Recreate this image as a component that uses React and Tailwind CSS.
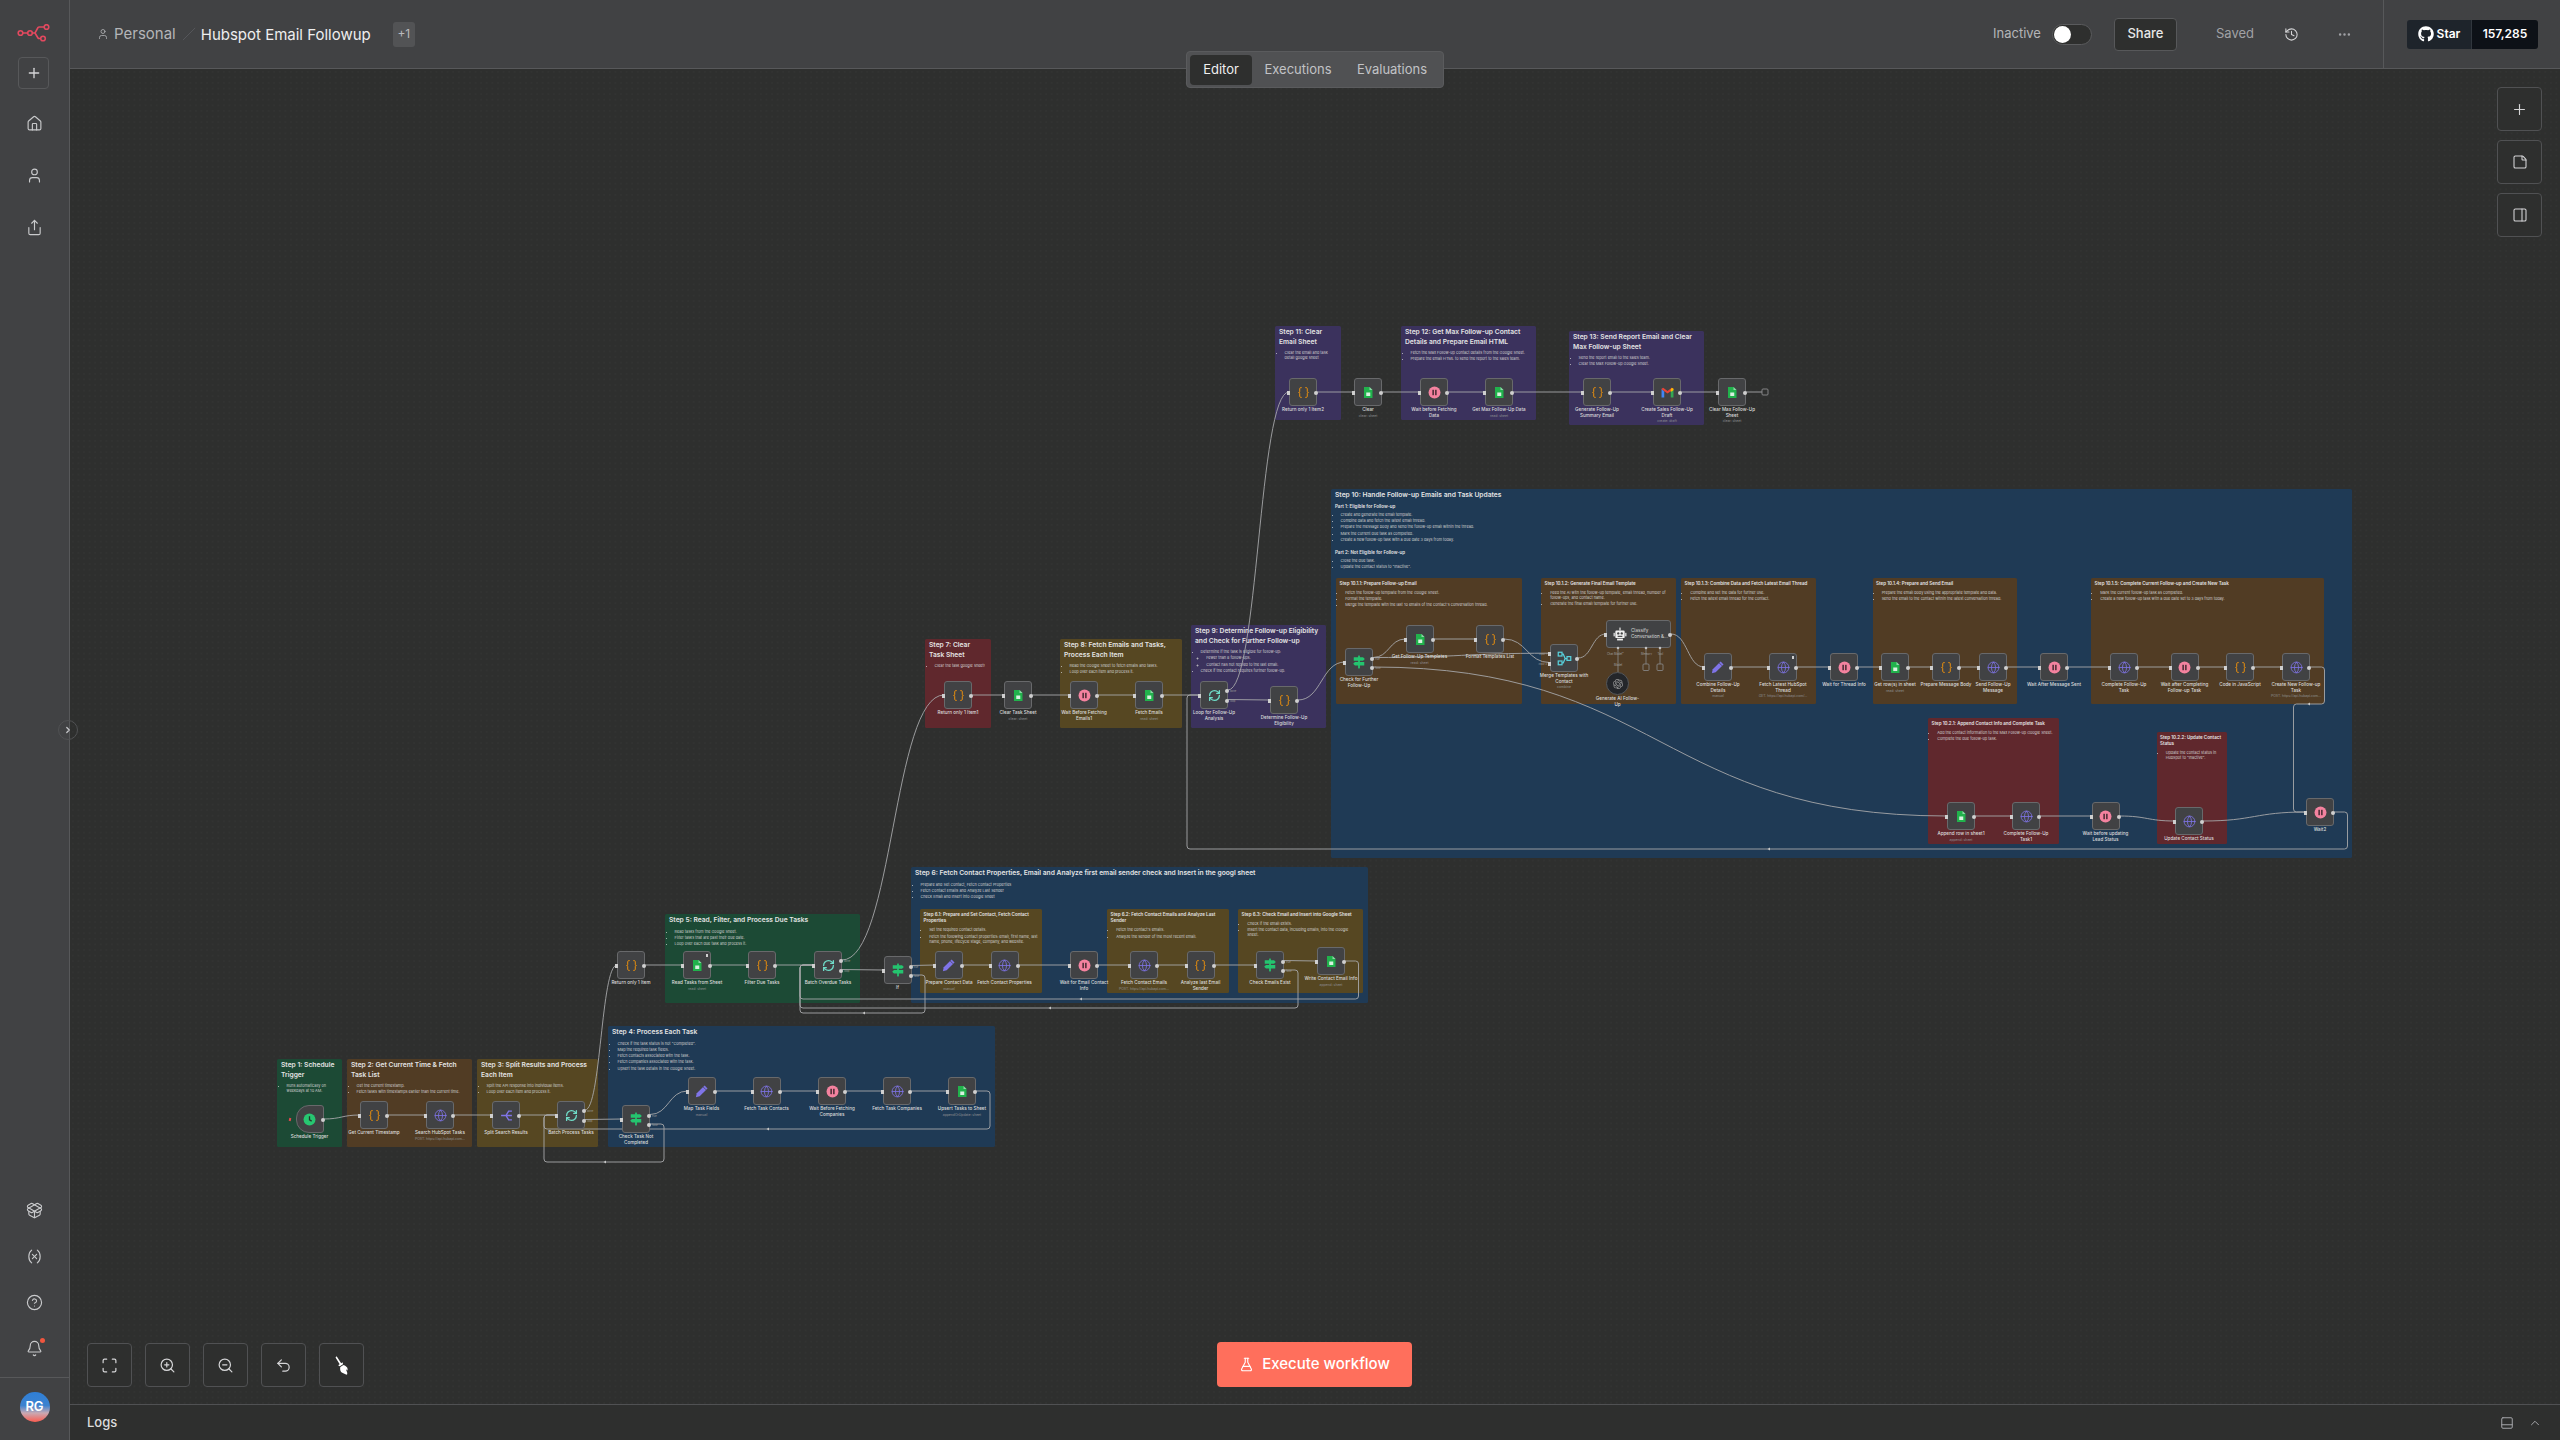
import {
  Plus, House, User, Share, PackageOpen, Variable, CircleHelp, Bell, History, Ellipsis,
  StickyNote, PanelRight, Maximize, ZoomIn, ZoomOut, Undo2, FlaskConical, ChevronUp,
  ChevronRight, PanelBottom, Braces, Globe, RefreshCw, Slash,
} from 'lucide-react';
import { FaBroom, FaGithub } from 'react-icons/fa';
import { SiOpenai } from 'react-icons/si';

const GREEN = 'bg-[#1c4a35]';
const BROWN = 'bg-[#513c24]';
const OLIVE = 'bg-[#564722]';
const BLUE = 'bg-[#1f3a55]';
const RED = 'bg-[#60282d]';
const PURPLE = 'bg-[#3b325d]';

const stickies = [
  { x: 277, y: 1059, w: 65, h: 88, color: GREEN, title: 'Step 1: Schedule Trigger', items: ['Runs automatically on weekdays at 10 AM.'] },
  { x: 347, y: 1059, w: 125, h: 88, color: BROWN, title: 'Step 2: Get Current Time & Fetch Task List', items: ['Get the current timestamp.', 'Fetch tasks with timestamps earlier than the current time.'] },
  { x: 477, y: 1059, w: 121, h: 88, color: OLIVE, title: 'Step 3: Split Results and Process Each Item', items: ['Split the API response into individual items.', 'Loop over each item and process it.'] },
  { x: 608, y: 1026, w: 387, h: 121, color: BLUE, title: 'Step 4: Process Each Task', items: ['Check if the task status is not "Completed".', 'Map the required task fields.', 'Fetch contacts associated with the task.', 'Fetch companies associated with the task.', 'Upsert the task details in the Google Sheet.'] },
  { x: 665, y: 914, w: 195, h: 89, color: GREEN, title: 'Step 5: Read, Filter, and Process Due Tasks', items: ['Read tasks from the Google Sheet.', 'Filter tasks that are past their due date.', 'Loop over each due task and process it.'] },
  { x: 911, y: 867, w: 457, h: 136, color: BLUE, title: 'Step 6: Fetch Contact Properties, Email and Analyze first email sender check and Insert in the googl sheet', items: ['Prepare and Set Contact, Fetch Contact Properties', 'Fetch Contact Emails and Analyze Last Sender', 'Check Email and Insert into Google Sheet'] },
  { x: 920, y: 909, w: 122, h: 84, color: OLIVE, small: true, title: 'Step 6.1: Prepare and Set Contact, Fetch Contact Properties', items: ['Set the required contact details.', 'Fetch the following contact properties: email, first name, last name, phone, lifecycle stage, company, and website.'] },
  { x: 1107, y: 909, w: 121.5, h: 84, color: OLIVE, small: true, title: 'Step 6.2: Fetch Contact Emails and Analyze Last Sender', items: ["Fetch the contact's emails.", 'Analyze the sender of the most recent email.'] },
  { x: 1238, y: 909, w: 125, h: 84, color: OLIVE, small: true, title: 'Step 6.3: Check Email and Insert into Google Sheet', items: ['Check if the email exists.', 'Insert the contact data, including emails, into the Google Sheet.'] },
  { x: 925, y: 639, w: 66, h: 89, color: RED, title: 'Step 7: Clear Task Sheet', items: ['Clear the task google sheet!'] },
  { x: 1060, y: 639, w: 122, h: 89, color: OLIVE, title: 'Step 8: Fetch Emails and Tasks, Process Each Item', items: ['Read the Google Sheet to fetch emails and tasks.', 'Loop over each item and process it.'] },
  { x: 1191, y: 625, w: 135, h: 103, color: PURPLE, title: 'Step 9: Determine Follow-up Eligibility and Check for Further Follow-up', items: ['Determine if the task is eligible for follow-up:', ['Fewer than 8 follow-ups.', 'Contact has not replied to the last email.'], 'Check if the contact requires further follow-up.'] },
  { x: 1275, y: 326, w: 66, h: 94, color: PURPLE, title: 'Step 11: Clear Email Sheet', items: ['Clear the email and task detail google sheet'] },
  { x: 1401, y: 326, w: 135, h: 94, color: PURPLE, title: 'Step 12: Get Max Follow-up Contact Details and Prepare Email HTML', items: ['Fetch the Max Follow-up contact details from the Google Sheet.', 'Prepare the email HTML to send the report to the sales team.'] },
  { x: 1569, y: 331, w: 135, h: 94, color: PURPLE, title: 'Step 13: Send Report Email and Clear Max Follow-up Sheet', items: ['Send the report email to the sales team.', 'Clear the Max Follow-up Google Sheet.'] },
  {
    x: 1331, y: 489, w: 1021, h: 369, color: BLUE, title: 'Step 10: Handle Follow-up Emails and Task Updates',
    parts: [
      { head: 'Part 1: Eligible for Follow-up', items: ['Create and generate the email template.', 'Combine data and fetch the latest email thread.', 'Prepare the message body and send the follow-up email within the thread.', 'Mark the current due task as completed.', 'Create a new follow-up task with a due date 3 days from today.'] },
      { head: 'Part 2: Not Eligible for Follow-up', items: ['Close the due task.', 'Update the contact status to "Inactive".'] },
    ],
  },
  { x: 1336, y: 578, w: 186, h: 126, color: BROWN, small: true, title: 'Step 10.1.1: Prepare Follow-up Email', items: ['Fetch the follow-up template from the Google Sheet.', 'Format the template.', "Merge the template with the last 10 emails of the contact's conversation thread."] },
  { x: 1541, y: 578, w: 134.5, h: 126, color: BROWN, small: true, title: 'Step 10.1.2: Generate Final Email Template', items: ['Feed the AI with the follow-up template, email thread, number of follow-ups, and contact name.', 'Generate the final email template for further use.'] },
  { x: 1681, y: 578, w: 135, h: 126, color: BROWN, small: true, title: 'Step 10.1.3: Combine Data and Fetch Latest Email Thread', items: ['Combine and set the data for further use.', 'Fetch the latest email thread for the contact.'] },
  { x: 1872.5, y: 578, w: 144, h: 126, color: BROWN, small: true, title: 'Step 10.1.4: Prepare and Send Email', items: ['Prepare the email body using the appropriate template and data.', 'Send the email to the contact within the latest conversation thread.'] },
  { x: 2091, y: 578, w: 233, h: 126, color: BROWN, small: true, title: 'Step 10.1.5: Complete Current Follow-up and Create New Task', items: ['Mark the current follow-up task as completed.', 'Create a new follow-up task with a due date set to 3 days from today.'] },
  { x: 1928, y: 718, w: 130.5, h: 126, color: RED, small: true, title: 'Step 10.2.1: Append Contact Info and Complete Task', items: ['Add the contact information to the Max Follow-up Google Sheet.', 'Complete the due follow-up task.'] },
  { x: 2156.5, y: 732, w: 70, h: 112, color: RED, small: true, title: 'Step 10.2.2: Update Contact Status', items: ['Update the contact status in HubSpot to "Inactive".'] },
];

const LOOP_OUTS = [{ at: 9, text: 'done' }, { at: 18.5, text: 'loop' }];
const IF_OUTS = [{ at: 9.5, text: 'true' }, { at: 19, text: 'false' }];

const nodes = [
  { id: 'sched', x: 295.5, y: 1105, icon: 'clock', label: 'Schedule Trigger', trigger: true },
  { id: 'now', x: 360, y: 1101, icon: 'code', label: 'Get Current Timestamp' },
  { id: 'search', x: 426, y: 1101, icon: 'globe', label: 'Search HubSpot Tasks', sub: 'POST: https://api.hubapi.com...' },
  { id: 'split', x: 492, y: 1101, icon: 'split', label: 'Split Search Results' },
  { id: 'batch', x: 557, y: 1101, icon: 'loop', label: 'Batch Process Tasks', outs: LOOP_OUTS },
  { id: 'check', x: 622, y: 1105, icon: 'if', label: 'Check Task Not\nCompleted', outs: IF_OUTS },
  { id: 'map', x: 687.5, y: 1077, icon: 'edit', label: 'Map Task Fields', sub: 'manual' },
  { id: 'contacts', x: 752.5, y: 1077, icon: 'globe', label: 'Fetch Task Contacts' },
  { id: 'waitco', x: 818, y: 1077, icon: 'wait', label: 'Wait Before Fetching\nCompanies' },
  { id: 'companies', x: 883, y: 1077, icon: 'globe', label: 'Fetch Task Companies' },
  { id: 'upsert', x: 948, y: 1077, icon: 'sheet', label: 'Upsert Tasks to Sheet', sub: 'appendOrUpdate: sheet' },

  { id: 'ret', x: 617, y: 951, icon: 'code', label: 'Return only 1 Item' },
  { id: 'read', x: 683, y: 951, icon: 'sheet', label: 'Read Tasks from Sheet', sub: 'read: sheet', mark: true },
  { id: 'due', x: 748, y: 951, icon: 'code', label: 'Filter Due Tasks' },
  { id: 'overdue', x: 814, y: 951, icon: 'loop', label: 'Batch Overdue Tasks', outs: LOOP_OUTS },
  { id: 'if', x: 883.5, y: 956, icon: 'if', label: 'If', outs: IF_OUTS },
  { id: 'prep', x: 935, y: 951, icon: 'edit', label: 'Prepare Contact Data', sub: 'manual' },
  { id: 'props', x: 990.5, y: 951, icon: 'globe', label: 'Fetch Contact Properties' },
  { id: 'waitmail', x: 1070, y: 951, icon: 'wait', label: 'Wait for Email Contact\nInfo' },
  { id: 'mails', x: 1130, y: 951, icon: 'globe', label: 'Fetch Contact Emails', sub: 'POST: https://api.hubapi.com...' },
  { id: 'analyze', x: 1186.5, y: 951, icon: 'code', label: 'Analyze last Email\nSender' },
  { id: 'exist', x: 1256, y: 951, icon: 'if', label: 'Check Emails Exist', outs: IF_OUTS },
  { id: 'write', x: 1317, y: 947, icon: 'sheet', label: 'Write Contact Email Info', sub: 'append: sheet' },

  { id: 'ret1', x: 944, y: 681, icon: 'code', label: 'Return only 1 Item1' },
  { id: 'cleartask', x: 1004, y: 681, icon: 'sheet', label: 'Clear Task Sheet', sub: 'clear: sheet' },
  { id: 'waitfetch', x: 1070, y: 681, icon: 'wait', label: 'Wait Before Fetching\nEmails1' },
  { id: 'fetchmails', x: 1135, y: 681, icon: 'sheet', label: 'Fetch Emails', sub: 'read: sheet' },
  { id: 'loop', x: 1200, y: 681, icon: 'loop', label: 'Loop for Follow-Up\nAnalysis', outs: LOOP_OUTS },
  { id: 'elig', x: 1270, y: 686, icon: 'code', label: 'Determine Follow-Up\nEligibility' },

  { id: 'ret2', x: 1289, y: 378, icon: 'code', label: 'Return only 1 Item2' },
  { id: 'clear', x: 1354, y: 378, icon: 'sheet', label: 'Clear', sub: 'clear: sheet' },
  { id: 'waitdata', x: 1420, y: 378, icon: 'wait', label: 'Wait before Fetching\nData' },
  { id: 'max', x: 1485, y: 378, icon: 'sheet', label: 'Get Max Follow-Up Data', sub: 'read: sheet' },
  { id: 'summary', x: 1583, y: 378, icon: 'code', label: 'Generate Follow-Up\nSummary Email' },
  { id: 'draft', x: 1653, y: 378, icon: 'gmail', label: 'Create Sales Follow-Up\nDraft', sub: 'create: draft' },
  { id: 'clearmax', x: 1718, y: 378, icon: 'sheet', label: 'Clear Max Follow-Up\nSheet', sub: 'clear: sheet' },

  { id: 'further', x: 1345, y: 648, icon: 'if', label: 'Check for Further\nFollow-Up', outs: IF_OUTS },
  { id: 'tpl', x: 1405.5, y: 625, icon: 'sheet', label: 'Get Follow-Up Templates', sub: 'read: sheet' },
  { id: 'fmt', x: 1476, y: 625, icon: 'code', label: 'Format Templates List' },
  { id: 'merge', x: 1550, y: 644, icon: 'merge', label: 'Merge Templates with\nContact', sub: 'combine', ins: [{ at: 9.2, text: 'Input 1' }, { at: 18.6, text: 'Input 2' }] },
  { id: 'combine', x: 1704, y: 653, icon: 'edit', label: 'Combine Follow-Up\nDetails', sub: 'manual' },
  { id: 'thread', x: 1769, y: 653, icon: 'globe', label: 'Fetch Latest HubSpot\nThread', sub: 'GET: https://api.hubapi.com/...', mark: true },
  { id: 'waitthread', x: 1830, y: 653, icon: 'wait', label: 'Wait for Thread Info' },
  { id: 'rows', x: 1881, y: 653, icon: 'sheet', label: 'Get row(s) in sheet', sub: 'read: sheet' },
  { id: 'body', x: 1932, y: 653, icon: 'code', label: 'Prepare Message Body' },
  { id: 'send', x: 1979, y: 653, icon: 'globe', label: 'Send Follow-Up\nMessage' },
  { id: 'waitsent', x: 2040, y: 653, icon: 'wait', label: 'Wait After Message Sent' },
  { id: 'complete', x: 2110, y: 653, icon: 'globe', label: 'Complete Follow-Up\nTask' },
  { id: 'waitdone', x: 2170.5, y: 653, icon: 'wait', label: 'Wait after Completing\nFollow-up Task' },
  { id: 'js', x: 2226, y: 653, icon: 'code', label: 'Code in JavaScript' },
  { id: 'newtask', x: 2282, y: 653, icon: 'globe', label: 'Create New Follow-up\nTask', sub: 'POST: https://api.hubapi.com...' },

  { id: 'append', x: 1947, y: 802, icon: 'sheet', label: 'Append row in sheet1', sub: 'append: sheet' },
  { id: 'complete1', x: 2012, y: 802, icon: 'globe', label: 'Complete Follow-Up\nTask1' },
  { id: 'waitlead', x: 2091.5, y: 802, icon: 'wait', label: 'Wait before updating\nLead Status' },
  { id: 'status', x: 2175, y: 807, icon: 'globe', label: 'Update Contact Status' },
  { id: 'wait2', x: 2306, y: 798, icon: 'wait', label: 'Wait2' },
];

const byId = Object.fromEntries(nodes.map((n) => [n.id, n]));

function outAt(id, i = 0) {
  const n = byId[id];
  return [n.x + 28, n.y + (n.outs ? n.outs[i].at : 14)];
}

function inAt(id, i = 0) {
  const n = byId[id];
  return [n.x, n.y + (n.ins ? n.ins[i].at : 14)];
}

function curve([x1, y1], [x2, y2]) {
  if (Math.abs(y1 - y2) < 1) return `M${x1} ${y1}L${x2} ${y2}`;
  const mid = (x1 + x2) / 2;
  return `M${x1} ${y1}C${mid} ${y1} ${mid} ${y2} ${x2} ${y2}`;
}

// orthogonal back-edge with small rounded corners
function rounded(points, r = 3) {
  let d = `M${points[0][0]} ${points[0][1]}`;
  for (let i = 1; i < points.length - 1; i++) {
    const [px, py] = points[i - 1];
    const [x, y] = points[i];
    const [nx, ny] = points[i + 1];
    const a = [x - Math.sign(x - px) * r, y - Math.sign(y - py) * r];
    const b = [x + Math.sign(nx - x) * r, y + Math.sign(ny - y) * r];
    d += `L${a[0]} ${a[1]}Q${x} ${y} ${b[0]} ${b[1]}`;
  }
  const last = points[points.length - 1];
  return d + `L${last[0]} ${last[1]}`;
}

function chain(ids) {
  return ids.slice(1).map((id, i) => curve(outAt(ids[i]), inAt(id)));
}

const edges = [
  ...chain(['sched', 'now', 'search', 'split', 'batch']),
  curve(outAt('batch', 1), inAt('check')),
  curve(outAt('batch', 0), inAt('ret')),
  curve(outAt('check', 0), inAt('map')),
  ...chain(['map', 'contacts', 'waitco', 'companies', 'upsert']),
  rounded([outAt('upsert'), [990, 1091], [990, 1129], [544, 1129], [544, 1115], inAt('batch')]),
  rounded([outAt('check', 1), [664, 1124], [664, 1162], [544, 1162], [544, 1115], inAt('batch')]),

  ...chain(['ret', 'read', 'due', 'overdue']),
  curve(outAt('overdue', 0), inAt('ret1')),
  curve(outAt('overdue', 1), inAt('if')),
  curve(outAt('if', 0), inAt('prep')),
  ...chain(['prep', 'props', 'waitmail', 'mails', 'analyze', 'exist']),
  curve(outAt('exist', 0), inAt('write')),
  rounded([outAt('exist', 1), [1298, 970], [1298, 1008], [800, 1008], [800, 965], inAt('overdue')]),
  rounded([outAt('write'), [1358.5, 961], [1358.5, 999], [800, 999], [800, 965], inAt('overdue')]),
  rounded([outAt('if', 1), [925, 975], [925, 1013], [800, 1013], [800, 965], inAt('overdue')]),

  ...chain(['ret1', 'cleartask', 'waitfetch', 'fetchmails', 'loop']),
  curve(outAt('loop', 0), inAt('ret2')),
  curve(outAt('loop', 1), inAt('elig')),
  curve(outAt('elig'), inAt('further')),
  ...chain(['ret2', 'clear', 'waitdata', 'max', 'summary', 'draft', 'clearmax']),
  'M1746 392L1762 392',

  curve(outAt('further', 0), inAt('tpl')),
  curve(outAt('further', 0), inAt('merge', 0)),
  curve(outAt('further', 1), inAt('append')),
  ...chain(['tpl', 'fmt']),
  curve(outAt('fmt'), inAt('merge', 1)),
  curve(outAt('merge'), [1606, 634]),
  curve([1671, 634], inAt('combine')),
  ...chain(['combine', 'thread', 'waitthread', 'rows', 'body', 'send', 'waitsent', 'complete', 'waitdone', 'js', 'newtask']),
  rounded([outAt('newtask'), [2324.5, 667], [2324.5, 704], [2293.5, 704], [2293.5, 812], inAt('wait2')]),
  rounded([outAt('wait2'), [2347.5, 812], [2347.5, 849], [1187, 849], [1187, 695], inAt('loop')]),
  ...chain(['append', 'complete1', 'waitlead', 'status', 'wait2']),
];

const arrows = [[768, 1129], [605, 1162], [1050, 1008], [1081, 999], [864, 1013], [2309, 704], [1769, 849]];

function SheetIcon() {
  return (
    <svg viewBox="0 0 24 24" className="w-[12px] h-[13px]">
      <path d="M4 1h11l6 6v16H4z" fill="#21b24c" />
      <path d="M15 1l6 6h-6z" fill="#8fd5a8" />
      <rect x="8.5" y="12" width="8" height="7" fill="#d8f1e0" />
    </svg>
  );
}

function WaitIcon() {
  return (
    <svg viewBox="0 0 24 24" className="w-[13px] h-[13px]">
      <circle cx="12" cy="12" r="11" fill="#f4829f" />
      <rect x="8" y="7" width="3" height="10" fill="#54303b" />
      <rect x="13" y="7" width="3" height="10" fill="#54303b" />
    </svg>
  );
}

function EditIcon() {
  return (
    <svg viewBox="0 0 24 24" className="w-[14px] h-[14px]">
      <path d="M16.5 2.5l5 5L8 21l-6.5 1.5L3 16z" fill="#7f74e8" />
      <path d="M14 5l5 5" stroke="#414244" strokeWidth="1.2" />
    </svg>
  );
}

function IfIcon() {
  return (
    <svg viewBox="0 0 24 24" className="w-[14px] h-[14px]" fill="#24c46f">
      <rect x="10.5" y="1" width="3" height="22" />
      <path d="M3 4h16l3 3-3 3H3z" />
      <path d="M21 12H5l-3 3 3 3h16z" />
    </svg>
  );
}

function SplitIcon() {
  return (
    <svg viewBox="0 0 24 24" fill="none" stroke="#7f74e8" strokeWidth="2.6" className="w-[13px] h-[13px]">
      <path d="M2 12h8M22 4h-6l-5 8 5 8h6M22 12H11" />
    </svg>
  );
}

function MergeIcon() {
  return (
    <svg viewBox="0 0 24 24" fill="none" stroke="#58d0dc" strokeWidth="2" className="w-[15px] h-[15px]">
      <rect x="2" y="2" width="6" height="6" />
      <rect x="2" y="16" width="6" height="6" />
      <rect x="16" y="9" width="6" height="6" />
      <path d="M8 5h2l3 7-3 7H8M13 12h3" />
    </svg>
  );
}

function ClockIcon() {
  return (
    <svg viewBox="0 0 24 24" className="w-[13px] h-[13px]">
      <circle cx="12" cy="12" r="11" fill="#27c671" />
      <path d="M12 6v6.5l4 2.5" fill="none" stroke="#24392d" strokeWidth="2.4" />
    </svg>
  );
}

function BotIcon() {
  return (
    <svg viewBox="0 0 24 24" className="w-[14px] h-[14px]" fill="#f0f0f0">
      <rect x="11" y="1" width="2" height="5" />
      <rect x="4" y="6" width="16" height="13" rx="2" />
      <rect x="1" y="10" width="2" height="6" />
      <rect x="21" y="10" width="2" height="6" />
      <rect x="7" y="20" width="10" height="3" />
      <circle cx="9" cy="11" r="2" fill="#414244" />
      <circle cx="15" cy="11" r="2" fill="#414244" />
      <rect x="8" y="15" width="8" height="2" fill="#414244" />
    </svg>
  );
}

function GmailIcon() {
  return (
    <svg viewBox="0 0 24 24" className="w-[13px] h-[13px]">
      <path d="M1 5v16h5V10z" fill="#4285f4" />
      <path d="M23 5v16h-5V10z" fill="#34a853" />
      <path d="M1 5l3-2 8 6 8-6 3 2v1l-11 8L1 6z" fill="#ea4335" />
      <path d="M20 3l3 2v3l-5 3V6z" fill="#fbbc04" />
    </svg>
  );
}

function NodeIcon({ name }) {
  if (name === 'code') return <Braces size={13} strokeWidth={1.8} className="text-[#f0920c]" />;
  if (name === 'globe') return <Globe size={13} strokeWidth={1.5} className="text-[#7f74e8]" />;
  if (name === 'loop') return <RefreshCw size={13} strokeWidth={2.4} className="text-[#6fdcc8]" />;
  if (name === 'sheet') return <SheetIcon />;
  if (name === 'wait') return <WaitIcon />;
  if (name === 'edit') return <EditIcon />;
  if (name === 'if') return <IfIcon />;
  if (name === 'split') return <SplitIcon />;
  if (name === 'merge') return <MergeIcon />;
  if (name === 'clock') return <ClockIcon />;
  if (name === 'gmail') return <GmailIcon />;
  return null;
}

function OutPort({ at, text }) {
  return (
    <div className="absolute left-full flex items-center" style={{ top: at - 2 }}>
      <div className="w-[4px] h-[4px] -ml-[2px] rounded-full bg-[#cfcfcf]" />
      {text && <span className="ml-[1px] text-[2.6px] leading-[4px] text-[#9a9a9a]">{text}</span>}
    </div>
  );
}

function InPort({ at, text }) {
  return (
    <div className="absolute right-full flex items-center" style={{ top: at - 2 }}>
      {text && <span className="mr-[1px] text-[2.6px] leading-[4px] text-[#9a9a9a] whitespace-nowrap">{text}</span>}
      <div className="w-[3px] h-[4px] bg-[#cfcfcf]" />
    </div>
  );
}

function WorkflowNode({ node }) {
  const outs = node.outs || [{ at: 14 }];
  const ins = node.trigger ? [] : node.ins || [{ at: 14 }];
  return (
    <div
      className={`absolute w-[28px] h-[28px] flex items-center justify-center bg-[#414244] border border-[#68696b] ${node.trigger ? 'rounded-l-[13px] rounded-r-[3px]' : 'rounded-[3px]'}`}
      style={{ left: node.x, top: node.y }}
    >
      <NodeIcon name={node.icon} />
      {node.mark && <div className="absolute top-[2px] right-[2px] w-[2.5px] h-[3px] border-[0.5px] border-[#d0d0d0]" />}
      {node.trigger && <span className="absolute left-[-8px] top-[12px] w-[2px] h-[3px] bg-[#e5484d] rotate-12" />}
      {ins.map((p) => <InPort key={p.at} {...p} />)}
      {outs.map((p) => <OutPort key={p.at} {...p} />)}
      <div className="absolute top-full left-1/2 -translate-x-1/2 mt-[2px] text-center whitespace-pre">
        <div className="text-[4.6px] leading-[5.9px] font-medium text-[#dcdcdc]">{node.label}</div>
        {node.sub && <div className="mt-[0.6px] text-[3.4px] leading-[4.4px] text-[#8f9092]">{node.sub}</div>}
      </div>
    </div>
  );
}

function AgentNode() {
  return (
    <>
      <div className="absolute left-[1606px] top-[620px] w-[65px] h-[28px] flex items-center gap-[4px] pl-[6px] bg-[#414244] border border-[#68696b] rounded-[3px]">
        <BotIcon />
        <span className="text-[4.6px] leading-[6.2px] text-[#dcdcdc] whitespace-pre">{'Classify\nConversation &...'}</span>
        <div className="absolute right-full top-[12px] w-[3px] h-[4px] bg-[#cfcfcf]" />
        <div className="absolute left-full top-[12px] w-[4px] h-[4px] -ml-[2px] rounded-full bg-[#cfcfcf]" />
      </div>
      <svg className="absolute left-0 top-0 w-full h-full pointer-events-none" fill="none" stroke="#8c8d8f" strokeWidth="0.8">
        <path d="M1618 648V672M1646 648V664M1660 648V664" />
        <path d="M1618 646.5l1.5 1.5-1.5 1.5-1.5-1.5zM1646 646.5l1.5 1.5-1.5 1.5-1.5-1.5zM1660 646.5l1.5 1.5-1.5 1.5-1.5-1.5z" fill="#cfcfcf" stroke="none" />
        <rect x="1643" y="664" width="6" height="6.5" rx="1" />
        <rect x="1657" y="664" width="6" height="6.5" rx="1" />
      </svg>
      <span className="absolute left-[1607px] top-[651.5px] text-[2.8px] leading-[4px] text-[#a0a0a0]">Chat Model*</span>
      <span className="absolute left-[1641px] top-[651.5px] text-[2.8px] leading-[4px] text-[#a0a0a0]">Memory</span>
      <span className="absolute left-[1657.5px] top-[651.5px] text-[2.8px] leading-[4px] text-[#a0a0a0]">Tool</span>
      <span className="absolute left-[1614px] top-[662.5px] text-[2.8px] leading-[4px] text-[#a0a0a0]">Model</span>
      <div className="absolute left-[1606px] top-[672px] w-[23px] h-[23px] rounded-full flex items-center justify-center bg-[#24262a] border border-[#55575a]">
        <SiOpenai size={10} className="text-[#9a9a9a]" />
        <div className="absolute top-full left-1/2 -translate-x-1/2 mt-[2px] text-center whitespace-pre text-[4.6px] leading-[5.9px] font-medium text-[#dcdcdc]">{'Generate AI Follow-\nUp'}</div>
      </div>
    </>
  );
}

function BulletList({ items, className }) {
  return (
    <ul className={`list-disc pl-[5.6px] text-[3.8px] leading-[5.1px] text-[#cfcfcf] ${className || ''}`}>
      {items.map((item, i) =>
        Array.isArray(item) ? (
          <li key={i} className="list-none">
            <ul className="pl-[5.6px] [list-style-type:circle]">
              {item.map((sub) => <li key={sub} className="mb-[1.1px]">{sub}</li>)}
            </ul>
          </li>
        ) : (
          <li key={i} className="mb-[1.1px]">{item}</li>
        ),
      )}
    </ul>
  );
}

function Sticky({ note }) {
  return (
    <div
      className={`absolute rounded-[1.5px] overflow-hidden ${note.small ? 'px-[3.6px] pt-[2.7px]' : 'pl-[4px] pr-[6px] pt-[2.4px]'} ${note.color}`}
      style={{ left: note.x, top: note.y, width: note.w, height: note.h }}
    >
      <div className={note.small ? 'mb-[2.5px] text-[4.5px] leading-[6.6px] font-semibold text-[#e4e4e4]' : 'mb-[3px] text-[6.7px] leading-[9.4px] font-semibold text-[#e4e4e4]'}>
        {note.title}
      </div>
      {note.items && <BulletList items={note.items} />}
      {note.parts &&
        note.parts.map((part) => (
          <div key={part.head} className="mb-[8px]">
            <div className="text-[4.5px] leading-[6.6px] font-semibold text-[#e4e4e4]">{part.head}</div>
            <BulletList items={part.items} className="mt-[1.7px]" />
          </div>
        ))}
    </div>
  );
}

function WorkflowGraph() {
  return (
    <div className="absolute left-[-70px] top-[-69px] w-[2560px] h-[1440px] pointer-events-none">
      {stickies.map((note) => <Sticky key={note.title} note={note} />)}
      <svg className="absolute left-0 top-0 w-full h-full" fill="none" stroke="#a6a7a9" strokeWidth="0.9">
        {edges.map((d, i) => <path key={i} d={d} />)}
        {arrows.map(([x, y]) => (
          <polygon key={x} points={`${x - 1.5},${y} ${x + 1},${y - 1.6} ${x + 1},${y + 1.6}`} fill="#c8c8c8" stroke="none" />
        ))}
        <rect x="1762" y="389" width="6" height="6" rx="1" stroke="#8c8d8f" />
      </svg>
      {nodes.map((node) => <WorkflowNode key={node.id} node={node} />)}
      <AgentNode />
    </div>
  );
}

function N8nLogo() {
  return (
    <svg viewBox="0 0 34 18" className="w-[34px] h-[18px]" fill="none" stroke="#e2495f" strokeWidth="1.6">
      <circle cx="3.5" cy="9" r="2.3" />
      <circle cx="13" cy="9" r="2.3" />
      <circle cx="29.5" cy="3" r="2.3" />
      <circle cx="26" cy="14.5" r="2.3" />
      <path d="M5.8 9h4.9M15.3 9h2.7l3-5.5c.4-.5.8-.5 1.2-.5h5M18 9l3 5c.3.5.8.5 1.2.5h1.5" />
    </svg>
  );
}

function SideIcon({ children }) {
  return <div className="w-full h-[52px] flex items-center justify-center text-[#c9cacc]">{children}</div>;
}

function Sidebar() {
  return (
    <aside className="w-[70px] shrink-0 h-full flex flex-col bg-[#414244] border-r border-[#57585a]">
      <div className="h-[57px] pl-[17px] pt-[24px]"><N8nLogo /></div>
      <button className="ml-[18px] w-[31px] h-[32px] flex items-center justify-center rounded-[4px] border border-[#57585a] text-[#d5d5d7]">
        <Plus size={16} />
      </button>
      <div className="mt-[8px] flex flex-col pr-[1px]">
        <SideIcon><House size={17} strokeWidth={1.6} /></SideIcon>
        <SideIcon><User size={17} strokeWidth={1.6} /></SideIcon>
        <SideIcon><Share size={17} strokeWidth={1.6} /></SideIcon>
      </div>
      <div className="mt-auto flex flex-col">
        <div className="h-[46px] flex items-center justify-center text-[#c9cacc]"><PackageOpen size={17} strokeWidth={1.6} /></div>
        <div className="h-[46px] flex items-center justify-center text-[#c9cacc]"><Variable size={17} strokeWidth={1.6} /></div>
        <div className="h-[46px] flex items-center justify-center text-[#c9cacc]"><CircleHelp size={17} strokeWidth={1.6} /></div>
        <div className="h-[46px] flex items-center justify-center text-[#c9cacc]">
          <div className="relative">
            <Bell size={17} strokeWidth={1.6} />
            <span className="absolute -top-[2px] -right-[2px] w-[5px] h-[5px] rounded-full bg-[#f0563f]" />
          </div>
        </div>
        <div className="mt-[6px] h-[63px] border-t border-[#57585a] flex items-start justify-center pt-[14px]">
          <div className="w-[30px] h-[30px] rounded-full flex items-center justify-center text-[13px] font-semibold text-white bg-[linear-gradient(180deg,#2f7fd6_0%,#3c82cf_45%,#c9a9b3_70%,#fb5c50_100%)]">
            RG
          </div>
        </div>
      </div>
    </aside>
  );
}

function Header() {
  return (
    <header className="h-[69px] shrink-0 flex items-center bg-[#414244] border-b border-[#57585a] font-normal">
      <div className="ml-[27px] flex items-center text-[15px] text-[#b4b5b8]">
        <User size={12} strokeWidth={1.6} className="mr-[5px]" />
        Personal
      </div>
      <Slash size={14} strokeWidth={1} className="ml-[6px] mr-[5px] text-[#65666a]" />
      <div className="text-[15px] text-[#eeeeef] leading-none">Hubspot Email Followup</div>
      <div className="ml-[22px] w-[22px] h-[25px] flex items-center justify-center rounded-[3px] bg-[#525355] text-[12px] text-[#b9babd]">+1</div>

      <div className="ml-auto flex items-center h-full">
        <span className="text-[13px] text-[#b4b5b8]">Inactive</span>
        <div className="ml-[11px] w-[40px] h-[21px] p-[1px] rounded-full bg-[#2e2f2e] border border-[#5a5b5d]">
          <div className="w-[17px] h-[17px] rounded-full bg-white" />
        </div>
        <button className="ml-[22px] w-[63px] h-[33px] rounded-[4px] bg-[#2e2f2e] border border-[#57585a] text-[13px] font-medium text-[#e8e8e8]">Share</button>
        <span className="ml-[39px] text-[13px] text-[#a0a1a5]">Saved</span>
        <History size={15} strokeWidth={1.7} className="ml-[30px] text-[#d5d5d7]" />
        <Ellipsis size={15} className="ml-[38px] text-[#a0a1a5]" />
        <div className="ml-[31px] h-full w-[24px] border-l border-[#57585a]" />
        <div className="flex items-center h-[29px] mr-[22px] rounded-[3px] overflow-hidden text-[12px] font-semibold text-white">
          <div className="w-[64px] h-full flex items-center justify-center gap-[3px] bg-[#1e242b]">
            <FaGithub size={16} />
            Star
          </div>
          <div className="w-[67px] h-full flex items-center justify-center bg-[#0d1117] border-l border-[#30363d]">157,285</div>
        </div>
      </div>
    </header>
  );
}

function ToolButton({ children }) {
  return (
    <button className="w-[45px] h-[44px] flex items-center justify-center rounded-[4px] bg-[#2e2f2e] border border-[#505153] text-[#d5d5d7]">
      {children}
    </button>
  );
}

function Canvas() {
  return (
    <div className="relative flex-1 bg-[#2e2f2e] bg-[radial-gradient(circle,#404140_0.5px,transparent_0.7px)] bg-[length:5.6px_5.6px]">
      <WorkflowGraph />

      <div className="absolute left-[1116px] top-[-18px] w-[258px] h-[37px] flex items-center p-[3px] rounded-[4px] bg-[#505153] border border-[#5a5b5d] text-[13px] text-[#c2c3c6]">
        <div className="w-[62px] h-[30px] flex items-center justify-center rounded-[4px] bg-[#2e2f2e] text-[#f0f0f0]">Editor</div>
        <div className="w-[92px] text-center">Executions</div>
        <div className="flex-1 text-center">Evaluations</div>
      </div>

      <div className="absolute right-[18px] top-[18px] flex flex-col gap-[9px]">
        <ToolButton><Plus size={17} strokeWidth={1.6} /></ToolButton>
        <ToolButton><StickyNote size={16} strokeWidth={1.6} /></ToolButton>
        <ToolButton><PanelRight size={16} strokeWidth={1.6} /></ToolButton>
      </div>

      <div className="absolute left-[17px] bottom-[17px] flex gap-[13px]">
        <ToolButton><Maximize size={17} strokeWidth={1.7} /></ToolButton>
        <ToolButton><ZoomIn size={17} strokeWidth={1.7} /></ToolButton>
        <ToolButton><ZoomOut size={17} strokeWidth={1.7} /></ToolButton>
        <ToolButton><Undo2 size={17} strokeWidth={1.7} /></ToolButton>
        <ToolButton><FaBroom size={17} className="-scale-x-100 rotate-[20deg] text-white" /></ToolButton>
      </div>

      <button className="absolute left-[1147px] bottom-[17px] w-[195px] h-[45px] flex items-center justify-center gap-[8px] rounded-[4px] bg-[#ff6f5c] text-[15px] font-medium text-white">
        <FlaskConical size={15} strokeWidth={1.8} />
        Execute workflow
      </button>
    </div>
  );
}

export default function App() {
  return (
    <div className="relative w-[2560px] h-[1440px] flex overflow-hidden bg-[#2e2f2e] font-['Inter',sans-serif]">
      <Sidebar />
      <main className="flex-1 min-w-0 flex flex-col">
        <Header />
        <Canvas />
        <footer className="h-[36px] shrink-0 flex items-center justify-between pl-[17px] pr-[18px] bg-[#2e2f2e] border-t border-[#505153] text-[#dcdcdc]">
          <span className="text-[13px] font-medium">Logs</span>
          <div className="flex items-center gap-[14px] text-[#a5a6aa]">
            <PanelBottom size={14} strokeWidth={1.7} />
            <ChevronUp size={14} strokeWidth={1.7} />
          </div>
        </footer>
      </main>
      <button className="absolute left-[58px] top-[720px] w-[20px] h-[20px] flex items-center justify-center rounded-full border border-[#505153] text-[#c5c6ca]">
        <ChevronRight size={10} strokeWidth={3} />
      </button>
    </div>
  );
}
